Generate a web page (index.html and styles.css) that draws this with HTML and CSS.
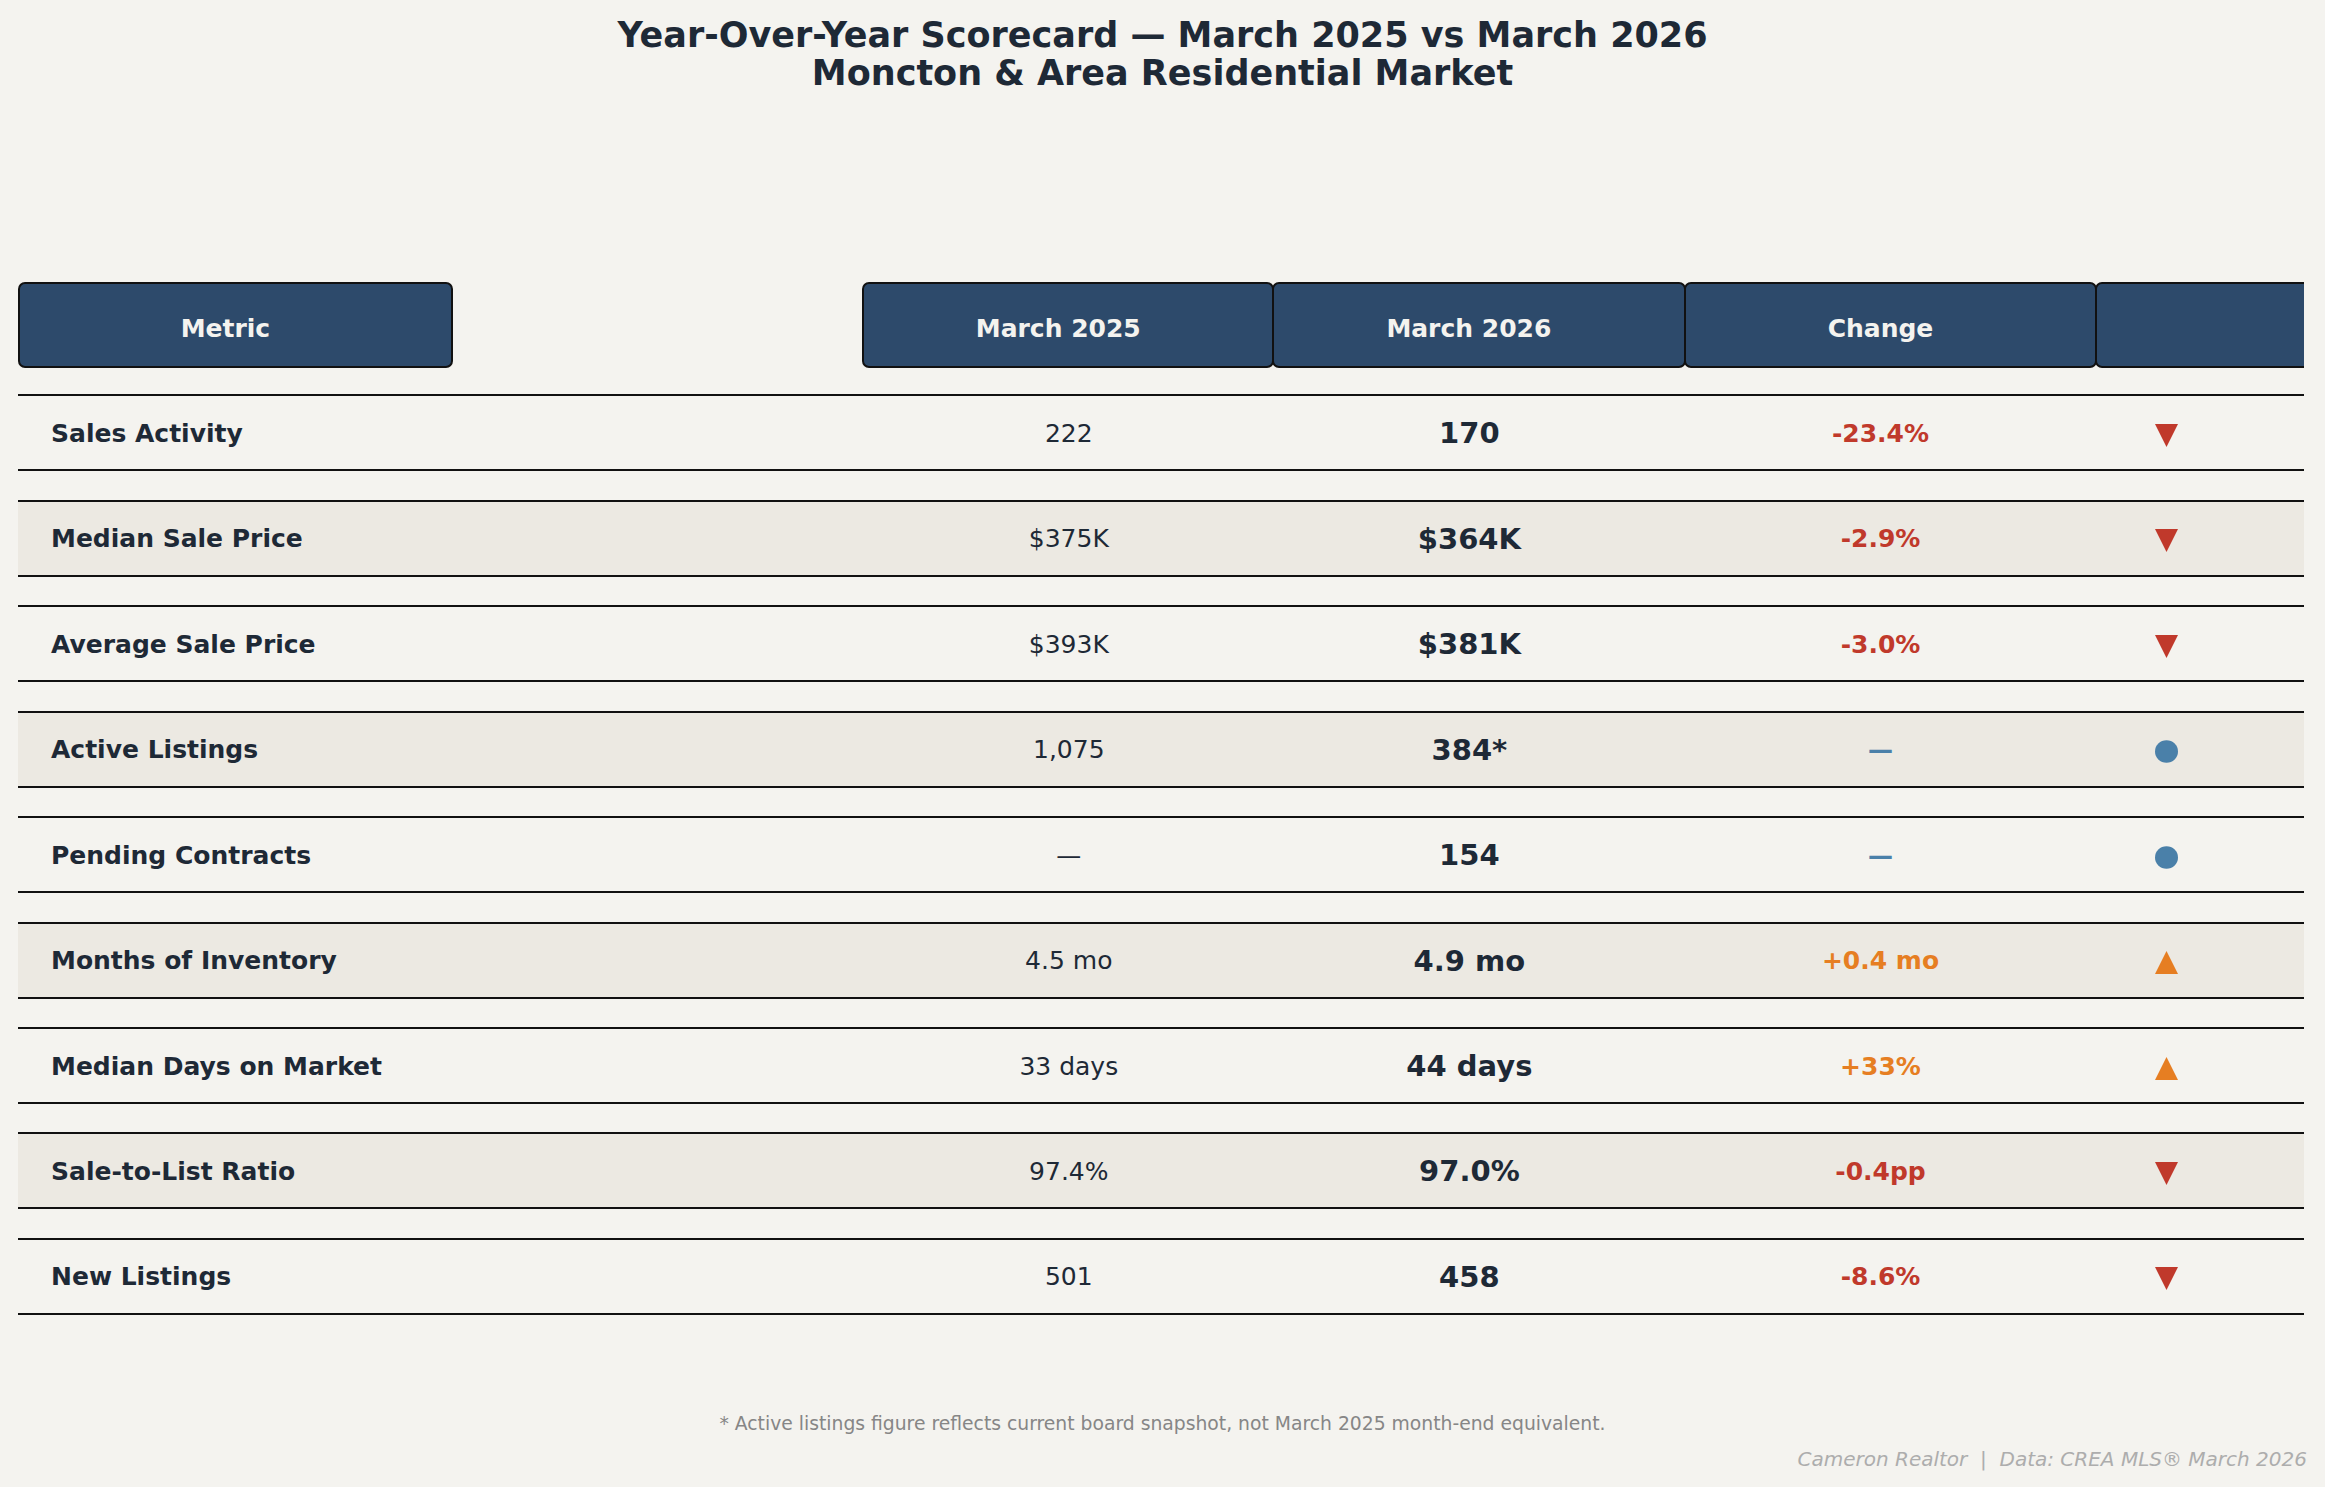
FILE: index.html
```html
<!DOCTYPE html>
<html lang="en">
<head>
<meta charset="utf-8">
<title>Year-Over-Year Scorecard</title>
<link rel="stylesheet" href="styles.css">
</head>
<body>
<div class="page">
  <h1 class="title">Year-Over-Year Scorecard — March 2025 vs March 2026<br>Moncton &amp; Area Residential Market</h1>

  <div class="table">
    <div class="head">
      <div class="hcell">Metric</div>
      <div class="hspace"></div>
      <div class="hcell">March 2025</div>
      <div class="hcell joined">March 2026</div>
      <div class="hcell joined">Change</div>
      <div class="hcell joined"></div>
    </div>

    <div class="rows">
      <div class="row">
        <div class="label">Sales Activity</div>
        <div class="prev">222</div>
        <div class="cur">170</div>
        <div class="chg down">-23.4%</div>
        <div class="ind"><svg class="ico" viewBox="0 0 23 23"><polygon class="down-fill" points="0,0 23,0 11.5,23"/></svg></div>
      </div>
      <div class="row alt">
        <div class="label">Median Sale Price</div>
        <div class="prev">$375K</div>
        <div class="cur">$364K</div>
        <div class="chg down">-2.9%</div>
        <div class="ind"><svg class="ico" viewBox="0 0 23 23"><polygon class="down-fill" points="0,0 23,0 11.5,23"/></svg></div>
      </div>
      <div class="row">
        <div class="label">Average Sale Price</div>
        <div class="prev">$393K</div>
        <div class="cur">$381K</div>
        <div class="chg down">-3.0%</div>
        <div class="ind"><svg class="ico" viewBox="0 0 23 23"><polygon class="down-fill" points="0,0 23,0 11.5,23"/></svg></div>
      </div>
      <div class="row alt">
        <div class="label">Active Listings</div>
        <div class="prev">1,075</div>
        <div class="cur">384*</div>
        <div class="chg flat">—</div>
        <div class="ind"><svg class="ico" viewBox="0 0 23 23"><ellipse class="flat-fill" cx="11.5" cy="11.5" rx="11.5" ry="11.2"/></svg></div>
      </div>
      <div class="row">
        <div class="label">Pending Contracts</div>
        <div class="prev">—</div>
        <div class="cur">154</div>
        <div class="chg flat">—</div>
        <div class="ind"><svg class="ico" viewBox="0 0 23 23"><ellipse class="flat-fill" cx="11.5" cy="11.5" rx="11.5" ry="11.2"/></svg></div>
      </div>
      <div class="row alt">
        <div class="label">Months of Inventory</div>
        <div class="prev">4.5 mo</div>
        <div class="cur">4.9 mo</div>
        <div class="chg up">+0.4 mo</div>
        <div class="ind"><svg class="ico" viewBox="0 0 23 23"><polygon class="up-fill" points="11.5,0 23,23 0,23"/></svg></div>
      </div>
      <div class="row">
        <div class="label">Median Days on Market</div>
        <div class="prev">33 days</div>
        <div class="cur">44 days</div>
        <div class="chg up">+33%</div>
        <div class="ind"><svg class="ico" viewBox="0 0 23 23"><polygon class="up-fill" points="11.5,0 23,23 0,23"/></svg></div>
      </div>
      <div class="row alt">
        <div class="label">Sale-to-List Ratio</div>
        <div class="prev">97.4%</div>
        <div class="cur">97.0%</div>
        <div class="chg down">-0.4pp</div>
        <div class="ind"><svg class="ico" viewBox="0 0 23 23"><polygon class="down-fill" points="0,0 23,0 11.5,23"/></svg></div>
      </div>
      <div class="row">
        <div class="label">New Listings</div>
        <div class="prev">501</div>
        <div class="cur">458</div>
        <div class="chg down">-8.6%</div>
        <div class="ind"><svg class="ico" viewBox="0 0 23 23"><polygon class="down-fill" points="0,0 23,0 11.5,23"/></svg></div>
      </div>
    </div>
  </div>

  <p class="note">* Active listings figure reflects current board snapshot, not March 2025 month-end equivalent.</p>
  <p class="credit">Cameron Realtor&nbsp; |&nbsp; Data: CREA MLS® March 2026</p>
</div>
</body>
</html>
```

FILE: styles.css
```css
html, body {
  margin: 0;
  padding: 0;
}

body {
  background: #f4f3ef;
  color: #1e2936;
  font-family: "DejaVu Sans", "Noto Sans", sans-serif;
  width: 2325px;
  height: 1487px;
  overflow: hidden;
}

.page {
  width: 2325px;
}

.title {
  margin: 0;
  padding-top: 15.6px;
  font-size: 35px;
  line-height: 38px;
  font-weight: bold;
  text-align: center;
  color: #1e2936;
}

.table {
  margin: 190.4px 0 0 17.5px;
  width: 2286.5px;
  overflow: hidden;
}

.head {
  display: grid;
  grid-template-columns: 435.8px 409.2px 411.6px 411.6px 411.6px 411.6px;
  height: 86px;
}

.hcell {
  box-sizing: border-box;
  height: 86px;
  border: 2px solid #111;
  border-radius: 7px;
  background: #2d4a6b;
  color: #f4f3ef;
  font-size: 25px;
  font-weight: bold;
  display: flex;
  align-items: center;
  justify-content: center;
  padding: 7px 20px 0 0;
}

.hcell.joined {
  margin-left: -2px;
}

.rows {
  margin-top: 26.3px;
  display: flex;
  flex-direction: column;
  gap: 28.46px;
}

.row {
  display: grid;
  grid-template-columns: 845px 411.6px 411.6px 411.6px 206.8px;
  align-items: center;
  box-sizing: border-box;
  height: 77px;
  padding-top: 1px;
  border-top: 2px solid #111;
  border-bottom: 2px solid #111;
}

.row.alt {
  background: #ece9e2;
}

.label {
  padding-left: 33.5px;
  font-size: 25px;
  font-weight: bold;
}

.prev {
  text-align: center;
  padding-left: 1px;
  font-size: 25px;
}

.cur {
  text-align: center;
  padding-right: 21px;
  font-size: 29px;
  font-weight: bold;
}

.chg {
  text-align: center;
  padding-right: 22px;
  font-size: 25px;
  font-weight: bold;
}

.chg.down { color: #c0392b; }
.chg.up { color: #e67e22; }
.chg.flat { color: #4a80a9; }

.ind {
  display: flex;
  align-items: center;
  padding-left: 57.6px;
  padding-top: 4px;
}

.ico {
  display: block;
  width: 23px;
  height: 23px;
}

.down-fill { fill: #c0392b; }
.up-fill { fill: #e67e22; }
.flat-fill { fill: #4a80a9; }

.note {
  margin: 96.8px 0 0;
  font-size: 18.75px;
  line-height: 24px;
  text-align: center;
  color: #868686;
}

.credit {
  margin: 11px 0 0;
  padding-right: 18px;
  font-size: 20px;
  line-height: 24px;
  text-align: right;
  font-style: italic;
  color: #adadad;
}
```
